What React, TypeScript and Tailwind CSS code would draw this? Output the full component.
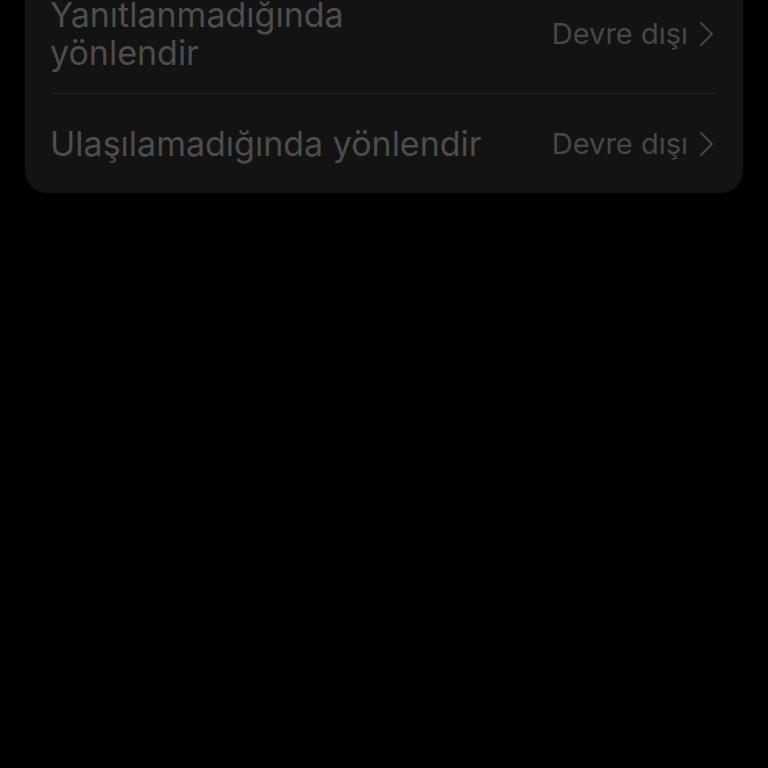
type Row = { label: string; value: string };

const rows: Row[] = [
  { label: "Yanıtlanmadığında yönlendir", value: "Devre dışı" },
  { label: "Ulaşılamadığında yönlendir", value: "Devre dışı" },
];

function Chevron() {
  return (
    <svg className="w-[20px] h-[26px] shrink-0" viewBox="0 0 20 26" fill="none" stroke="#464646" strokeWidth={2} strokeLinecap="round" strokeLinejoin="round">
      <path d="M3 2 L14 13 L3 24" />
    </svg>
  );
}

function SettingRow({ row, last }: { row: Row; last: boolean }) {
  return (
    <div
      className={`flex items-center justify-between gap-6 min-h-[99px] py-[21px] ${
        last ? "" : "border-b border-[#222222]"
      }`}
    >
      <span className="text-[34px] leading-[38px] text-[#4d4d4d] max-w-[440px]">{row.label}</span>
      <div className="flex items-center gap-[10px] shrink-0">
        <span className="text-[29px] leading-[38px] text-[#474747]">{row.value}</span>
        <Chevron />
      </div>
    </div>
  );
}

export default function App() {
  return (
    <div className="h-screen overflow-hidden bg-black px-[25px] font-['Inter',sans-serif]">
      <div className="-mt-[25px] bg-[#131313] rounded-[22px] px-[25px]">
        {rows.map((r, i) => (
          <SettingRow key={r.label} row={r} last={i === rows.length - 1} />
        ))}
      </div>
    </div>
  );
}
